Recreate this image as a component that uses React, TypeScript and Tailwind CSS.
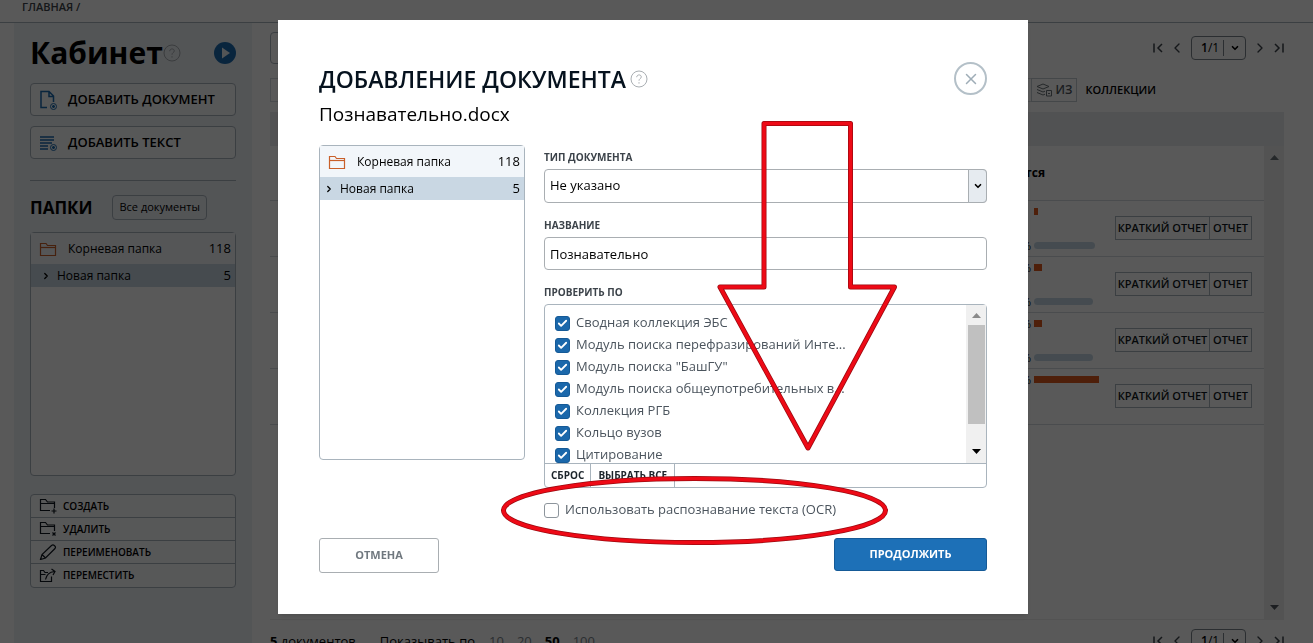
import React, { ReactNode } from "react";
import { Check, ChevronDown, ChevronLeft, ChevronRight, X } from "lucide-react";

type Action = {
  icon: ReactNode;
  label: string;
};

type Row = {
  borrowed: number;
  original: number;
  marks: [string, string];
};

const rows: Row[] = [
  { borrowed: 4, original: 61, marks: ["", "%"] },
  { borrowed: 8, original: 59, marks: ["%", "%"] },
  { borrowed: 8, original: 59, marks: ["%", "%"] },
  { borrowed: 65, original: 0, marks: ["%", ""] },
];

const sources = [
  "Сводная коллекция ЭБС",
  "Модуль поиска перефразирований Инте...",
  'Модуль поиска "БашГУ"',
  "Модуль поиска общеупотребительных в...",
  "Коллекция РГБ",
  "Кольцо вузов",
  "Цитирование",
];

const FolderIcon = () => (
  <svg className="h-4 w-[18px] shrink-0" viewBox="0 0 18 16" fill="none" stroke="#c9602a" strokeWidth="1.2">
    <path d="M1.5 14.5v-12H7l1.5 2h8v10z" />
    <path d="M1.5 6.5h15" />
  </svg>
);

const HelpIcon = () => (
  <svg className="size-[18px] shrink-0" viewBox="0 0 18 18" fill="none" stroke="#a9aeb2">
    <circle cx="9" cy="9" r="8" />
    <path d="M6.7 7.2c0-3 4.6-3 4.6-.3 0 1.7-2.3 1.7-2.3 3.8" />
    <path d="M9 12.2v1.4" />
  </svg>
);

const actions: Action[] = [
  {
    label: "СОЗДАТЬ",
    icon: (
      <>
        <path d="M11 12.5H1.5v-11h5l2 2.5h7v6" />
        <path d="M1.5 5.5h14M15 10.5v5M12.5 13h5" />
      </>
    ),
  },
  {
    label: "УДАЛИТЬ",
    icon: (
      <>
        <path d="M11 12.5H1.5v-11h5l2 2.5h7v6" />
        <path d="M1.5 5.5h14M13.5 11.5l3 3M16.5 11.5l-3 3" />
      </>
    ),
  },
  {
    label: "ПЕРЕИМЕНОВАТЬ",
    icon: <path d="M1.5 15.5l1.5-5 9.5-9c2-1.5 5 1 3.5 3l-9.5 9.5zM3 10.5l3.5 3.5" />,
  },
  {
    label: "ПЕРЕМЕСТИТЬ",
    icon: (
      <>
        <path d="M12.5 8.5v5h-11v-11h3l1.5 2h3M1.5 6.5h5" />
        <path d="M6.5 11.5c1-5 4-7.5 9-8M12.5 1l3.5 2.5-2 3.5" />
      </>
    ),
  },
];

const FolderTree = ({ inset, height }: { inset: string; height: string }) => (
  <div className={`rounded-sm border border-[#a9b4bd] bg-white text-[12px] ${height}`}>
    <div className="flex h-[31px] items-center bg-[#f2f6fa] pl-2 pr-1">
      <FolderIcon />
      <span className="flex-1 pl-[11px]">Корневая папка</span>
      <span className="text-[13px]">118</span>
    </div>
    <div className={`flex h-[23px] items-center bg-[#c9d7e3] pr-1 ${inset}`}>
      <ChevronRight className="size-[10px]" strokeWidth={3} />
      <span className="flex-1 pl-[6px]">Новая папка</span>
      <span className="text-[13px]">5</span>
    </div>
  </div>
);

const Edge = ({ flip }: { flip?: boolean }) => (
  <svg
    className={flip ? "h-3 w-[10px] rotate-180" : "h-3 w-[10px]"}
    viewBox="0 0 10 12"
    fill="none"
    stroke="#3c434a"
    strokeWidth="1.5"
  >
    <path d="M1 1.5v9M9 2L5 6l4 4" />
  </svg>
);

const Pager = () => (
  <div className="flex items-center text-[#3c434a]">
    <button aria-label="Первая страница"><Edge /></button>
    <button aria-label="Назад" className="ml-[6px]"><ChevronLeft className="size-4" /></button>
    <button className="ml-[6px] flex h-6 w-[55px] items-center rounded-sm border border-[#7d858c] pl-[9px] text-[12px] text-black">
      <b className="font-semibold">1</b>/1
      <span className="ml-1 flex h-4 flex-1 items-center justify-center border-l border-[#7d858c]">
        <ChevronDown className="size-[10px]" strokeWidth={4} />
      </span>
    </button>
    <button aria-label="Вперёд" className="ml-[6px]"><ChevronRight className="size-4" /></button>
    <button aria-label="Последняя страница" className="ml-[6px]"><Edge flip /></button>
  </div>
);

const Sidebar = () => (
  <aside className="ml-[14px] w-[238px] shrink-0 bg-[#edf2f7] px-4">
    <div className="flex h-[60px] items-center">
      <h1 className="text-[30px] font-bold leading-[60px]">Кабинет</h1>
      <HelpIcon />
      <svg className="ml-auto size-[22px]" viewBox="0 0 22 22">
        <circle cx="11" cy="11" r="11" fill="#1b6bb0" />
        <path d="M8 5.5l8 5.5-8 5.5z" fill="#edf2f7" />
      </svg>
    </div>
    <div className="flex flex-col gap-[10px] text-[13px] font-semibold">
      <button className="flex h-[33px] items-center rounded-sm border border-[#a9b4bd] bg-[#fafbfc] pl-2">
        <svg className="h-[22px] w-[19px]" viewBox="0 0 19 22" fill="none" stroke="#1b6bb0" strokeWidth="1.5">
          <path d="M8 18.5H2v-16h8l4.5 4.5v6M10 2.5v5h4.5" />
          <circle cx="14.5" cy="17.5" r="3" strokeWidth="1" />
          <path d="M14.5 16v3M13 17.5h3" />
        </svg>
        <span className="pl-[10px]">ДОБАВИТЬ ДОКУМЕНТ</span>
      </button>
      <button className="flex h-[33px] items-center rounded-sm border border-[#a9b4bd] bg-[#fafbfc] pl-2">
        <svg className="h-[22px] w-[19px]" viewBox="0 0 19 22" fill="none" stroke="#1b6bb0" strokeWidth="1.5">
          <path d="M1 5h14M1 8h14M1 11h12M1 14h8M1 17h8" />
          <circle cx="14.5" cy="15.5" r="3" strokeWidth="1" />
          <path d="M14.5 14v3M13 15.5h3" />
        </svg>
        <span className="pl-[10px]">ДОБАВИТЬ ТЕКСТ</span>
      </button>
    </div>
    <hr className="mt-[21px] border-[#a9b4bd]" />
    <div className="mb-3 mt-[14px] flex items-center gap-5">
      <h2 className="text-[17px] font-bold leading-[25px]">ПАПКИ</h2>
      <button className="h-[25px] rounded-sm border border-[#a9b4bd] px-[6px] text-[11px]">Все документы</button>
    </div>
    <FolderTree inset="pl-[10px]" height="h-[244px]" />
    <div className="mt-[18px] divide-y divide-[#a9b4bd] rounded-sm border border-[#a9b4bd] bg-[#fafbfc]">
      {actions.map((action) => (
        <button key={action.label} className="flex h-[23px] w-full items-center gap-[6px] pl-2 text-[10px] font-semibold">
          <svg className="h-4 w-[18px]" viewBox="0 0 18 16" fill="none" stroke="#101820" strokeWidth="1.2">
            {action.icon}
          </svg>
          {action.label}
        </button>
      ))}
    </div>
  </aside>
);

const DocumentsPanel = () => (
  <main className="min-w-0 flex-1 pl-[18px] pr-[29px]">
    <div className="flex h-[50px] items-center justify-between">
      <div className="h-8 w-[300px] rounded-sm border border-[#a9b4bd]" />
      <Pager />
    </div>
    <div className="mt-[5px] flex h-6 items-center pr-[128px] text-[11px] font-semibold">
      <div className="flex h-full flex-1 items-center justify-end border border-r-0 border-[#d5dade] pr-1">В</div>
      <button className="flex h-full items-center gap-1 border border-[#c4cad0] px-1 text-[#50585f]">
        <svg className="h-[14px] w-4" viewBox="0 0 16 14" fill="none" stroke="#6a7278">
          <path d="M1 3.5L7 1l6 2.5L7 6zM1 6.5L7 9l2-.8M1 9.5L7 12l2-.8" />
          <path d="M10.5 7.5h5V13h-5zM12 10.5h2" />
        </svg>
        <span className="text-[12px]">ИЗ</span>
      </button>
      <span className="pl-2">КОЛЛЕКЦИИ</span>
    </div>
    <div className="mt-[10px] h-[34px] bg-[#e9ebee]" />
    <div className="flex h-[474px] border-b border-[#eeeeee]">
      <div className="flex-1">
        <table className="w-full table-fixed border-collapse">
          <colgroup>
            <col />
            <col className="w-[84px]" />
            <col className="w-[149px]" />
          </colgroup>
          <thead>
            <tr className="h-[54px] border-b border-[#d5dade]">
              <th colSpan={2} className="pr-[70px] text-right text-[12px] font-bold">тся</th>
              <th />
            </tr>
          </thead>
          <tbody>
            {rows.map((row, index) => (
              <tr key={index} className="h-[56px] border-b border-[#d5dade]">
                <td>
                  <div className="flex h-[41px] flex-col justify-between text-right text-[11px] leading-[7px]">
                    <span className="h-[7px]">{row.marks[0]}</span>
                    <span className="h-[7px]">{row.marks[1]}</span>
                  </div>
                </td>
                <td>
                  <div className="flex h-[41px] flex-col justify-between pl-[3px]">
                    <div className="h-[7px] bg-[#e05a1e]" style={{ width: row.borrowed }} />
                    <div className="h-[7px] rounded-full bg-[#c6d8e6]" style={{ width: row.original }} />
                  </div>
                </td>
                <td>
                  <div className="flex w-[137px] text-[11px] font-semibold text-[#101820]">
                    <button className="h-6 w-[95px] whitespace-nowrap border border-[#a9b4bd]">КРАТКИЙ ОТЧЕТ</button>
                    <button className="h-6 flex-1 border border-l-0 border-[#a9b4bd]">ОТЧЕТ</button>
                  </div>
                </td>
              </tr>
            ))}
          </tbody>
        </table>
      </div>
      <div className="flex w-5 flex-col items-center justify-between bg-[#eeeeee] py-[9px]">
        <svg className="h-[5px] w-[9px]" viewBox="0 0 9 5" fill="#6a7278"><path d="M0 5l4.5-5L9 5z" /></svg>
        <svg className="h-[5px] w-[9px]" viewBox="0 0 9 5" fill="#50585f"><path d="M0 0l4.5 5L9 0z" /></svg>
      </div>
    </div>
    <div className="flex items-start justify-between pt-[9px]">
      <div className="flex text-[13px] leading-6">
        <span><b>5</b> документов</span>
        <span className="pl-6">Показывать по</span>
        <span className="pl-[14px] text-[#7d858c]">10</span>
        <span className="pl-[13px] text-[#7d858c]">20</span>
        <b className="pl-[13px]">50</b>
        <span className="pl-[13px] text-[#7d858c]">100</span>
      </div>
      <Pager />
    </div>
  </main>
);

const CheckBox = ({ id, checked }: { id: string; checked?: boolean }) => (
  <span className="grid place-items-center">
    <input
      id={id}
      type="checkbox"
      defaultChecked={checked}
      className="peer col-start-1 row-start-1 size-[15px] appearance-none rounded-[3px] border border-[#8d959c] bg-white checked:border-[#155a97] checked:bg-[#1b68ab]"
    />
    <Check className="pointer-events-none col-start-1 row-start-1 hidden size-[11px] text-white peer-checked:block" strokeWidth={4} />
  </span>
);

// red arrow and oval that point at the OCR option
const Marks = () => (
  <svg
    className="pointer-events-none absolute left-0 top-0 h-[594px] w-[750px]"
    viewBox="278 20 750 594"
    fill="none"
    strokeLinejoin="round"
  >
    <g stroke="#9c0a10" strokeWidth="5">
      <path d="M764 123.5h86.5V287h44L808 448l-88-161h44z" />
      <ellipse cx="694.5" cy="510.5" rx="191" ry="32" />
    </g>
    <g stroke="#ee0a16" strokeWidth="3.5">
      <path d="M764 123.5h86.5V287h44L808 448l-88-161h44z" />
      <ellipse cx="694.5" cy="510.5" rx="191" ry="32" />
    </g>
  </svg>
);

const UploadDialog = () => (
  <section
    role="dialog"
    aria-labelledby="dialog-title"
    className="relative w-[750px] bg-white px-[41px] pb-[41px] pt-[42px] shadow-md"
  >
    <div className="flex items-center">
      <h2 id="dialog-title" className="text-[23px] font-semibold leading-8 text-[#06121e]">ДОБАВЛЕНИЕ ДОКУМЕНТА</h2>
      <span className="pl-1"><HelpIcon /></span>
      <button
        aria-label="Закрыть"
        className="ml-auto grid size-[33px] place-items-center rounded-full border-2 border-[#b4c0c8] text-[#9fadb7]"
      >
        <X className="size-[18px]" strokeWidth={2} />
      </button>
    </div>
    <p className="mt-[5px] text-[19px] leading-7">Познавательно.docx</p>

    <form className="mt-[17px]" onSubmit={(e) => e.preventDefault()}>
      <div className="flex gap-[19px]">
        <div className="w-[206px] shrink-0">
          <FolderTree inset="pl-1" height="h-[315px]" />
        </div>
        <div className="flex-1 pt-1">
          <label htmlFor="doc-type" className="block text-[10px] font-bold leading-4 text-[#3c434a]">ТИП ДОКУМЕНТА</label>
          <div className="mt-1 grid">
            <select id="doc-type" className="col-start-1 row-start-1 h-[34px] w-full appearance-none rounded-sm border border-[#a9aeb2] bg-white px-[5px] text-[13px]">
              <option>Не указано</option>
            </select>
            <span className="pointer-events-none col-start-1 row-start-1 grid h-[34px] w-[19px] place-items-center justify-self-end rounded-r-sm border border-[#a9aeb2] bg-[#e6ebf0]">
              <ChevronDown className="size-[10px]" strokeWidth={4} />
            </span>
          </div>
          <label htmlFor="doc-name" className="mt-[14px] block text-[10px] font-bold leading-4 text-[#3c434a]">НАЗВАНИЕ</label>
          <input
            id="doc-name"
            defaultValue="Познавательно"
            className="mt-1 block h-[33px] w-full rounded-sm border border-[#a9aeb2] px-[5px] text-[13px]"
          />
          <fieldset>
            <legend className="block pt-[14px] text-[10px] font-bold leading-4 text-[#3c434a]">ПРОВЕРИТЬ ПО</legend>
            <div className="mt-1 rounded-sm border border-[#a9b4bd]">
              <div className="flex h-[158px]">
                <div className="flex-1 overflow-hidden pl-[10px] pt-[7px]">
                  {sources.map((source, index) => (
                    <div key={source} className="flex h-[22px] items-center gap-[6px]">
                      <CheckBox id={`source-${index}`} checked />
                      <label htmlFor={`source-${index}`} className="text-[13px] text-[#4b545d]">{source}</label>
                    </div>
                  ))}
                </div>
                <div className="flex w-5 flex-col items-center bg-[#f0f0f0] pb-[9px] pt-2">
                  <svg className="h-[5px] w-[9px]" viewBox="0 0 9 5" fill="#8a8a8a"><path d="M0 5l4.5-5L9 5z" /></svg>
                  <div className="mt-[7px] h-[99px] w-[17px] bg-[#c0c0c0]" />
                  <svg className="mt-auto h-[5px] w-[9px]" viewBox="0 0 9 5"><path d="M0 0l4.5 5L9 0z" /></svg>
                </div>
              </div>
              <div className="flex h-6 border-t border-[#a9b4bd] text-[10px] font-bold text-[#1c242b]">
                <button type="button" className="border-r border-[#a9b4bd] px-[6px]">СБРОС</button>
                <button type="button" className="border-r border-[#a9b4bd] px-[7px]">ВЫБРАТЬ ВСЕ</button>
              </div>
            </div>
          </fieldset>
          <div className="mt-[11px] flex h-[22px] items-center gap-[6px]">
            <CheckBox id="ocr" />
            <label htmlFor="ocr" className="text-[13px] text-[#4b545d]">Использовать распознавание текста (OCR)</label>
          </div>
        </div>
      </div>
      <div className="mt-[17px] flex items-start justify-between">
        <button type="button" className="h-[35px] w-[120px] rounded-[3px] border border-[#a9aeb2] text-[11px] font-bold text-[#70787f]">
          ОТМЕНА
        </button>
        <button type="submit" className="h-[33px] w-[153px] rounded-[3px] border border-[#155a97] bg-[#1d70b7] text-[11px] font-bold text-white">
          ПРОДОЛЖИТЬ
        </button>
      </div>
    </form>
    <Marks />
  </section>
);

const App: React.FC = () => {
  return (
    <div className="h-screen overflow-hidden bg-white font-['Open_Sans','Noto_Sans',sans-serif] text-black">
      <header className="flex h-[23px] items-start border-b border-[#a9b4bd] pl-[22px]">
        <a href="#" className="text-[11px] font-semibold leading-[14px] text-[#3c434a]">ГЛАВНАЯ /</a>
      </header>
      <div className="flex min-h-full">
        <Sidebar />
        <DocumentsPanel />
      </div>
      <div className="fixed inset-0 flex items-start justify-center bg-black/65 pr-[7px] pt-5">
        <UploadDialog />
      </div>
    </div>
  );
};

export default App;
